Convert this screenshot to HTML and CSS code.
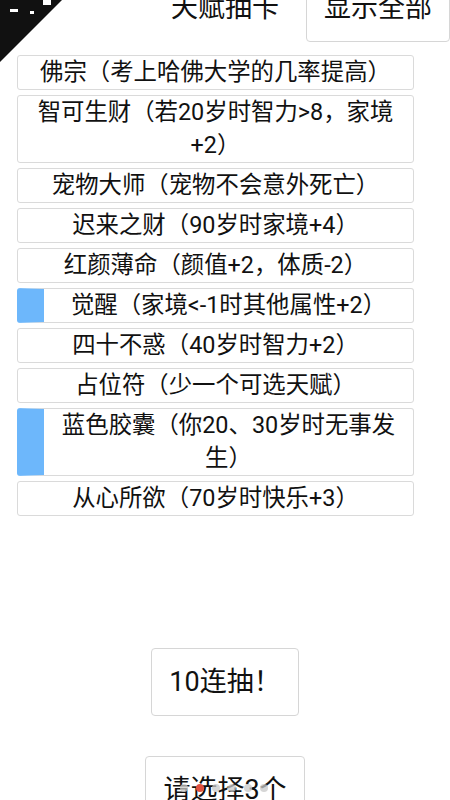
FILE: index.html
```html
<!DOCTYPE html>
<html lang="zh">
<head>
<meta charset="utf-8">
<title>天赋抽卡</title>
<link rel="stylesheet" href="styles.css">
</head>
<body>
<div class="page">
  <header class="header">
    <div class="title">天赋抽卡</div>
    <button class="btn show-all">显示全部</button>
  </header>
  <ul class="talents">
    <li class="talent">佛宗（考上哈佛大学的几率提高）</li>
    <li class="talent">智可生财（若20岁时智力&gt;8，家境+2）</li>
    <li class="talent">宠物大师（宠物不会意外死亡）</li>
    <li class="talent">迟来之财（90岁时家境+4）</li>
    <li class="talent">红颜薄命（颜值+2，体质-2）</li>
    <li class="talent selected">觉醒（家境&lt;-1时其他属性+2）</li>
    <li class="talent">四十不惑（40岁时智力+2）</li>
    <li class="talent">占位符（少一个可选天赋）</li>
    <li class="talent selected">蓝色胶囊（你20、30岁时无事发生）</li>
    <li class="talent">从心所欲（70岁时快乐+3）</li>
  </ul>
  <div class="actions">
    <button class="btn">10连抽！</button>
    <button class="btn">请选择3个</button>
  </div>
</div>
<div class="corner">
  <span class="speck s1"></span>
  <span class="speck s2"></span>
  <span class="speck s3"></span>
</div>
<div class="dots">
  <span class="dot"></span>
  <span class="dot active"></span>
  <span class="dot"></span>
  <span class="dot"></span>
  <span class="dot"></span>
  <span class="dot"></span>
</div>
</body>
</html>
```
FILE: styles.css
```css
html, body {
  margin: 0;
  padding: 0;
  background: #ffffff;
  overflow: hidden;
}
body {
  font-family: Roboto, "Noto Sans CJK SC", "Noto Sans", sans-serif;
  color: #111111;
  text-spacing-trim: space-all;
}
.page {
  margin-top: -26px;
}
.header {
  display: grid;
  grid-template-columns: 1fr auto 1fr;
  align-items: center;
  height: 68px;
}
.title {
  grid-column: 2;
  font-size: 27px;
  line-height: 32px;
  text-align: center;
}
.show-all {
  grid-column: 3;
  justify-self: end;
  margin-right: 6px;
}
.btn {
  font-family: Roboto, "Noto Sans CJK SC", "Noto Sans", sans-serif;
  font-size: 27px;
  line-height: 32px;
  color: #111111;
  background: #ffffff;
  border: 1px solid #d6d6d6;
  border-radius: 4px;
  padding: 17px 17px;
  margin: 0;
  white-space: nowrap;
  text-spacing-trim: space-all;
}
.talents {
  list-style: none;
  margin: 13px 36px 0 17px;
  padding: 0;
  display: flex;
  flex-direction: column;
  gap: 5px;
}
.talent {
  border: 1px solid #dadada;
  border-radius: 3px;
  font-size: 23.4px;
  line-height: 33px;
  text-align: center;
  background: #ffffff;
}
.talent.selected {
  border-left: 27px solid #6db7fb;
}
.actions {
  display: flex;
  flex-direction: column;
  align-items: center;
  gap: 40px;
  margin-top: 132px;
}
.corner {
  position: fixed;
  left: 0;
  top: 0;
  width: 62px;
  height: 62px;
  background: #111111;
  clip-path: polygon(0 0, 100% 0, 0 100%);
}
.speck {
  position: absolute;
  background: #ffffff;
}
.s1 { left: 10px; top: 9px; width: 8px; height: 3px; }
.s2 { left: 30px; top: 11px; width: 4px; height: 3px; }
.s3 { left: 43px; top: 0; width: 8px; height: 5px; }
.dots {
  position: fixed;
  left: 180px;
  top: 784px;
  display: flex;
  gap: 8px;
}
.dot {
  width: 8px;
  height: 8px;
  border-radius: 50%;
  background: rgba(200, 200, 200, 0.75);
}
.dot.active {
  background: #e0513f;
}
```
